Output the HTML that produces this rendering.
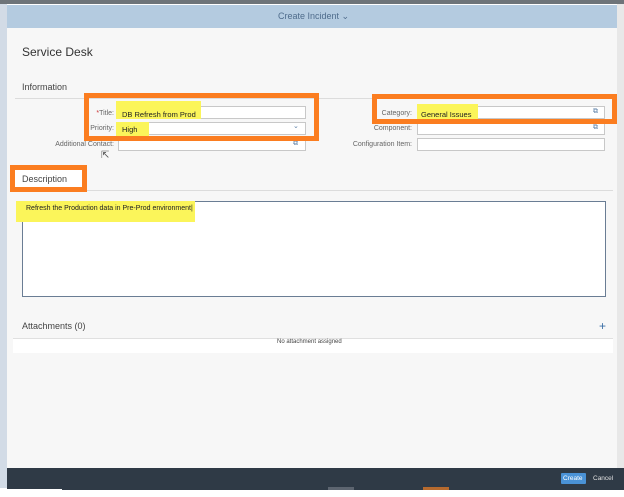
<!DOCTYPE html>
<html><head><style>
*{box-sizing:border-box;margin:0;padding:0}
body{width:624px;height:497px;background:#fff;position:relative;overflow:hidden;font-family:"Liberation Sans",sans-serif;color:#333}
.a{position:absolute}
.lbl{position:absolute;font-size:7px;color:#666;text-align:right}
.inp{position:absolute;background:#fff;border:1px solid #c8c8c8;height:13px}
.hl{position:absolute;background:#fbf55a}
.t{position:absolute;font-size:7.5px;color:#222;white-space:nowrap}
.ob{position:absolute;border:5px solid #fb7d20}
.ic{position:absolute;font-size:7px;color:#5a7ea6}
</style></head><body>
<div class="a" style="left:0;top:0;width:624px;height:4px;background:#6e7479"></div>
<div class="a" style="left:0;top:4px;width:7px;height:484px;background:#d2dbe6"></div>
<div class="a" style="left:7px;top:5px;width:610px;height:23px;background:#b4cbe0"></div>
<div class="a" style="left:617px;top:4px;width:7px;height:464px;background:#e8e8e8"></div>
<div class="t" style="left:278px;top:11px;font-size:9px;color:#4f6c8c">Create Incident &#8964;</div>
<div class="a" style="left:7px;top:28px;width:610px;height:440px;background:#f7f7f7"></div>
<div class="t" style="left:22px;top:45px;font-size:12px;color:#333">Service Desk</div>
<div class="t" style="left:22px;top:82px;font-size:9px;color:#444">Information</div>
<div class="a" style="left:15px;top:98px;width:598px;height:1px;background:#dcdcdc"></div>

<div class="inp" style="left:118px;top:106px;width:188px"></div>
<div class="inp" style="left:118px;top:122px;width:188px"></div>
<div class="inp" style="left:118px;top:138px;width:188px"></div>
<div class="hl" style="left:116px;top:101px;width:85px;height:18px"></div>
<div class="hl" style="left:116px;top:122px;width:33px;height:14px"></div>
<div class="t" style="left:122px;top:110px">DB Refresh from Prod</div>
<div class="t" style="left:122px;top:125px">High</div>
<div class="lbl" style="left:40px;top:110px;width:74px"><span style="color:#c33">*</span>Title:</div>
<div class="lbl" style="left:40px;top:125px;width:74px">Priority:</div>
<div class="lbl" style="left:20px;top:141px;width:94px">Additional Contact:</div>
<div class="ic" style="left:293px;top:122px">&#8964;</div>
<div class="ic" style="left:293px;top:140px">&#10697;</div>
<div class="t" style="left:101px;top:150px;font-size:10px;color:#555">&#8689;</div>
<div class="ob" style="left:84px;top:93px;width:235px;height:48px"></div>

<div class="inp" style="left:417px;top:106px;width:188px"></div>
<div class="inp" style="left:417px;top:122px;width:188px"></div>
<div class="inp" style="left:417px;top:138px;width:188px"></div>
<div class="hl" style="left:417px;top:104px;width:61px;height:16px"></div>
<div class="t" style="left:421px;top:110px">General Issues</div>
<div class="lbl" style="left:330px;top:110px;width:82px">Category:</div>
<div class="lbl" style="left:330px;top:125px;width:82px">Component:</div>
<div class="lbl" style="left:310px;top:141px;width:102px">Configuration Item:</div>
<div class="ic" style="left:593px;top:108px">&#10697;</div>
<div class="ic" style="left:593px;top:124px">&#10697;</div>
<div class="ob" style="left:372px;top:94px;width:245px;height:30px"></div>

<div class="a" style="left:87px;top:190px;width:526px;height:1px;background:#dcdcdc"></div>
<div class="a" style="left:15px;top:170px;width:67px;height:17px;background:#fff"></div>
<div class="t" style="left:22px;top:174px;font-size:9px;color:#444">Description</div>
<div class="ob" style="left:10px;top:165px;width:77px;height:27px"></div>

<div class="a" style="left:22px;top:201px;width:584px;height:96px;background:#fff;border:1px solid #6a7d94"></div>
<div class="hl" style="left:16px;top:201px;width:179px;height:21px"></div>
<div class="t" style="left:26px;top:205px;font-size:7px">Refresh the Production data in Pre-Prod environment|</div>

<div class="t" style="left:22px;top:321px;font-size:9px;color:#444">Attachments (0)</div>
<div class="t" style="left:599px;top:319px;font-size:12px;color:#3a6ea5">+</div>
<div class="a" style="left:13px;top:338px;width:600px;height:15px;background:#fff;border-top:1px solid #e0e0e0"></div>
<div class="t" style="left:277px;top:339px;font-size:6px;color:#444">No attachment assigned</div>

<div class="a" style="left:7px;top:468px;width:617px;height:21px;background:#2f3a46"></div>
<div class="a" style="left:561px;top:473px;width:25px;height:11px;background:#4a92d6;border-radius:1px"></div>
<div class="t" style="left:563px;top:475px;font-size:6.5px;color:#fff">Create</div>
<div class="t" style="left:593px;top:475px;font-size:6.5px;color:#e0e0e0">Cancel</div>
<div class="a" style="left:62px;top:488px;width:562px;height:2px;background:#2f3a46"></div>
<div class="a" style="left:328px;top:487px;width:26px;height:3px;background:#5d6570"></div>
<div class="a" style="left:423px;top:487px;width:26px;height:3px;background:#b66a2e"></div>
</body></html>
